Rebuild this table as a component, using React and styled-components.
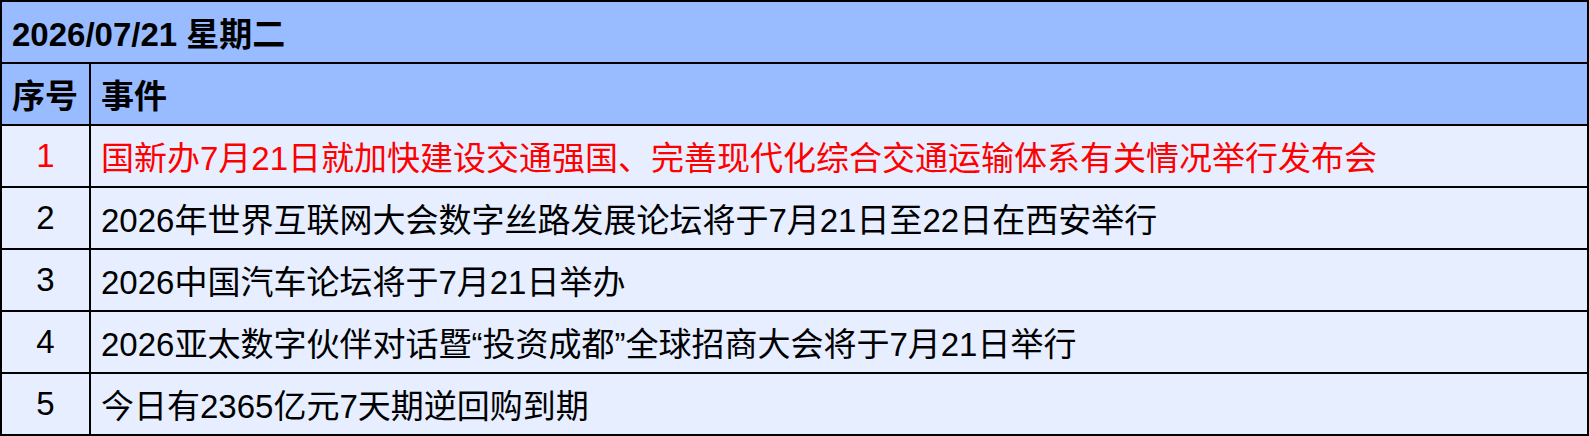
import styled, { createGlobalStyle } from "styled-components";

const GlobalStyle = createGlobalStyle`
  html, body {
    margin: 0;
    padding: 0;
    background: #ffffff;
  }
`;

const events = [
  { text: "国新办7月21日就加快建设交通强国、完善现代化综合交通运输体系有关情况举行发布会", hot: true },
  { text: "2026年世界互联网大会数字丝路发展论坛将于7月21日至22日在西安举行" },
  { text: "2026中国汽车论坛将于7月21日举办" },
  { text: "2026亚太数字伙伴对话暨“投资成都”全球招商大会将于7月21日举行" },
  { text: "今日有2365亿元7天期逆回购到期" },
];

const Table = styled.table`
  width: 1589px;
  border-collapse: collapse;
  font-family: "Liberation Sans", "Noto Sans CJK SC", sans-serif;
  font-size: 33px;
  color: #000;
  border: 2px solid #000;
  border-top-color: #444;
`;

const Row = styled.tr`
  height: 62px;
  background: ${(p) => (p.$head ? "#99bbff" : "#e6eeff")};
`;

const Cell = styled.td`
  border: 2px solid #000;
  padding: 0 10px;
  white-space: nowrap;
  vertical-align: middle;
  font-weight: ${(p) => (p.$bold ? 700 : 400)};
  text-align: ${(p) => (p.$center ? "center" : "left")};
  color: ${(p) => (p.$hot ? "#ff0000" : "#000")};
  width: ${(p) => (p.$narrow ? "67px" : "auto")};
`;

export default function App() {
  return (
    <>
      <GlobalStyle />
      <Table>
        <tbody>
          <Row $head>
            <Cell $bold colSpan={2}>2026/07/21 星期二</Cell>
          </Row>
          <Row $head>
            <Cell $bold $narrow>序号</Cell>
            <Cell $bold>事件</Cell>
          </Row>
          {events.map((e, i) => (
            <Row key={i}>
              <Cell $center $narrow $hot={e.hot}>{i + 1}</Cell>
              <Cell $hot={e.hot}>{e.text}</Cell>
            </Row>
          ))}
        </tbody>
      </Table>
    </>
  );
}
